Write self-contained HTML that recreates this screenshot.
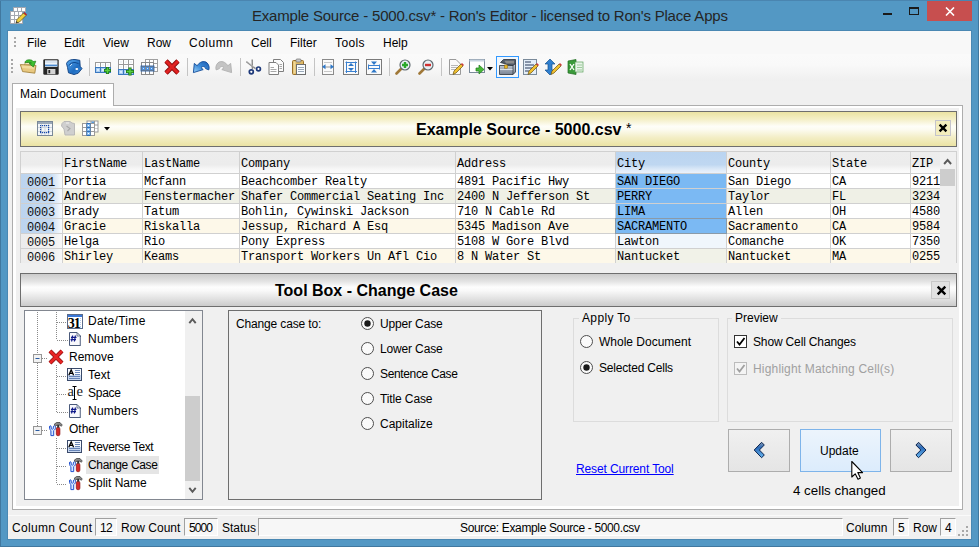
<!DOCTYPE html>
<html><head><meta charset="utf-8">
<style>
*{box-sizing:border-box}
html,body{margin:0;padding:0}
body{width:979px;height:547px;position:relative;overflow:hidden;background:#5398c4;font-family:"Liberation Sans",sans-serif;font-size:12px;color:#000}
.a{position:absolute}
.t{position:absolute;white-space:pre;line-height:1}
.mono{font-family:"Liberation Mono",monospace}
</style></head><body>
<!-- title bar -->
<div class="a" style="left:0;top:0;width:979px;height:547px;border:1px solid #41789f"></div>
<div class="a" style="left:7px;top:30px;width:965px;height:510px;border:1px solid #4a88b3"></div>
<div class="a" style="left:0;top:0;width:979px;height:1px;background:#4a85b0"></div>
<div class="t" style="left:252px;top:8px;font-size:15px;letter-spacing:-0.2px;color:#252525">Example Source - 5000.csv* - Ron's Editor - licensed to Ron's Place Apps</div>
<div class="a" style="left:883px;top:13px;width:9px;height:2px;background:#1a1a1a"></div>
<div class="a" style="left:909px;top:7px;width:10px;height:8px;border:1px solid #1a1a1a;border-top-width:2px"></div>
<div class="a" style="left:927px;top:1px;width:45px;height:20px;background:#c74f4f"></div>

<!-- client -->
<div class="a" style="left:8px;top:31px;width:963px;height:508px;background:#f0f0f0"></div>
<!-- menubar -->
<div class="a" style="left:8px;top:31px;width:963px;height:23px;background:#f8f8f8"></div>
<div class="t" style="left:27px;top:37px">File</div>
<div class="t" style="left:64px;top:37px">Edit</div>
<div class="t" style="left:103px;top:37px">View</div>
<div class="t" style="left:147px;top:37px">Row</div>
<div class="t" style="left:189px;top:37px;letter-spacing:0.5px">Column</div>
<div class="t" style="left:251px;top:37px">Cell</div>
<div class="t" style="left:290px;top:37px">Filter</div>
<div class="t" style="left:335px;top:37px;letter-spacing:0.4px">Tools</div>
<div class="t" style="left:383px;top:37px">Help</div>
<!-- toolbar -->
<div class="a" style="left:8px;top:54px;width:963px;height:27px;background:linear-gradient(#fafafa,#f9f9f9 40%,#efefef)"></div>

<!-- tab control -->
<div class="a" style="left:12px;top:105px;width:951px;height:405px;border:1px solid #adadad;background:#fff"></div>
<div class="a" style="left:16px;top:108px;width:943px;height:398px;background:#f0f0f0"></div>
<div class="a" style="left:12px;top:83px;width:102px;height:23px;border:1px solid #adadad;border-bottom:none;background:#fff"></div>
<div class="t" style="left:20px;top:88px;letter-spacing:0.15px">Main Document</div>

<!-- yellow header -->
<div class="a" style="left:20px;top:111px;width:937px;height:36px;border:1px solid #6e6e6e;background:linear-gradient(#ebe3a2 0%,#f4efc8 22%,#fefef8 42%,#fcfbf0 52%,#f3eec6 75%,#ebe3a3 100%)"></div>
<div class="t" style="left:416px;top:122px;font-size:16px;font-weight:bold">Example Source - 5000.csv <span style="font-weight:normal;font-size:14px;position:relative;top:-2px">*</span></div>
<div class="a" style="left:935px;top:120px;width:16px;height:16px;border:1px solid #c4c4cc;background:#f3edbd"></div>

<!-- grid -->
<!--GRID-->
<div class="a" id="grid" style="left:20px;top:151px;width:937px;height:112px;background:#fff;overflow:hidden">
<div class="a" style="left:0px;top:0;width:42px;height:22px;background:linear-gradient(#ededed,#ececec 62%,#f7f7f7 82%,#fbfbfb)"></div>
<div class="a" style="left:42px;top:0;width:80px;height:22px;background:linear-gradient(#ededed,#ececec 62%,#f7f7f7 82%,#fbfbfb)"></div>
<div class="t mono" style="left:44px;top:7px;font-size:12px;letter-spacing:-0.2px;color:#000">FirstName</div>
<div class="a" style="left:122px;top:0;width:97px;height:22px;background:linear-gradient(#ededed,#ececec 62%,#f7f7f7 82%,#fbfbfb)"></div>
<div class="t mono" style="left:124px;top:7px;font-size:12px;letter-spacing:-0.2px;color:#000">LastName</div>
<div class="a" style="left:219px;top:0;width:216px;height:22px;background:linear-gradient(#ededed,#ececec 62%,#f7f7f7 82%,#fbfbfb)"></div>
<div class="t mono" style="left:221px;top:7px;font-size:12px;letter-spacing:-0.2px;color:#000">Company</div>
<div class="a" style="left:435px;top:0;width:160px;height:22px;background:linear-gradient(#ededed,#ececec 62%,#f7f7f7 82%,#fbfbfb)"></div>
<div class="t mono" style="left:437px;top:7px;font-size:12px;letter-spacing:-0.2px;color:#000">Address</div>
<div class="a" style="left:595px;top:0;width:111px;height:22px;background:linear-gradient(#bad4f0,#bfd7f1 62%,#dae8f7 82%,#eaf2fb)"></div>
<div class="t mono" style="left:597px;top:7px;font-size:12px;letter-spacing:-0.2px;color:#000">City</div>
<div class="a" style="left:706px;top:0;width:104px;height:22px;background:linear-gradient(#ededed,#ececec 62%,#f7f7f7 82%,#fbfbfb)"></div>
<div class="t mono" style="left:708px;top:7px;font-size:12px;letter-spacing:-0.2px;color:#000">County</div>
<div class="a" style="left:810px;top:0;width:80px;height:22px;background:linear-gradient(#ededed,#ececec 62%,#f7f7f7 82%,#fbfbfb)"></div>
<div class="t mono" style="left:812px;top:7px;font-size:12px;letter-spacing:-0.2px;color:#000">State</div>
<div class="a" style="left:890px;top:0;width:30px;height:22px;background:linear-gradient(#ededed,#ececec 62%,#f7f7f7 82%,#fbfbfb)"></div>
<div class="t mono" style="left:892px;top:7px;font-size:12px;letter-spacing:-0.2px;color:#000">ZIP</div>
<div class="a" style="left:0px;top:22px;width:42px;height:15px;background:linear-gradient(90deg,#bcd4ef,#c4daf2 72%,#fafcfe)"></div>
<div class="t mono" style="left:7px;top:26px;font-size:12px;letter-spacing:-0.2px;color:#111">0001</div>
<div class="a" style="left:42px;top:22px;width:80px;height:15px;background:#ffffff"></div>
<div class="t mono" style="left:44px;top:25px;font-size:12px;letter-spacing:-0.2px;color:#000">Portia</div>
<div class="a" style="left:122px;top:22px;width:97px;height:15px;background:#ffffff"></div>
<div class="t mono" style="left:124px;top:25px;font-size:12px;letter-spacing:-0.2px;color:#000">Mcfann</div>
<div class="a" style="left:219px;top:22px;width:216px;height:15px;background:#ffffff"></div>
<div class="t mono" style="left:221px;top:25px;font-size:12px;letter-spacing:-0.2px;color:#000">Beachcomber Realty</div>
<div class="a" style="left:435px;top:22px;width:160px;height:15px;background:#ffffff"></div>
<div class="t mono" style="left:437px;top:25px;font-size:12px;letter-spacing:-0.2px;color:#000">4891 Pacific Hwy</div>
<div class="a" style="left:595px;top:22px;width:111px;height:15px;background:#7bb9f3"></div>
<div class="t mono" style="left:597px;top:25px;font-size:12px;letter-spacing:-0.2px;color:#000">SAN DIEGO</div>
<div class="a" style="left:706px;top:22px;width:104px;height:15px;background:#ffffff"></div>
<div class="t mono" style="left:708px;top:25px;font-size:12px;letter-spacing:-0.2px;color:#000">San Diego</div>
<div class="a" style="left:810px;top:22px;width:80px;height:15px;background:#ffffff"></div>
<div class="t mono" style="left:812px;top:25px;font-size:12px;letter-spacing:-0.2px;color:#000">CA</div>
<div class="a" style="left:890px;top:22px;width:30px;height:15px;background:#ffffff"></div>
<div class="t mono" style="left:892px;top:25px;font-size:12px;letter-spacing:-0.2px;color:#000">92111</div>
<div class="a" style="left:0px;top:37px;width:42px;height:15px;background:linear-gradient(90deg,#bcd4ef,#c4daf2 72%,#fafcfe)"></div>
<div class="t mono" style="left:7px;top:41px;font-size:12px;letter-spacing:-0.2px;color:#111">0002</div>
<div class="a" style="left:42px;top:37px;width:80px;height:15px;background:#eff0e6"></div>
<div class="t mono" style="left:44px;top:40px;font-size:12px;letter-spacing:-0.2px;color:#000">Andrew</div>
<div class="a" style="left:122px;top:37px;width:97px;height:15px;background:#eff0e6"></div>
<div class="t mono" style="left:124px;top:40px;font-size:12px;letter-spacing:-0.2px;color:#000">Fenstermacher</div>
<div class="a" style="left:219px;top:37px;width:216px;height:15px;background:#eff0e6"></div>
<div class="t mono" style="left:221px;top:40px;font-size:12px;letter-spacing:-0.2px;color:#000">Shafer Commercial Seating Inc</div>
<div class="a" style="left:435px;top:37px;width:160px;height:15px;background:#eff0e6"></div>
<div class="t mono" style="left:437px;top:40px;font-size:12px;letter-spacing:-0.2px;color:#000">2400 N Jefferson St</div>
<div class="a" style="left:595px;top:37px;width:111px;height:15px;background:#7bb9f3"></div>
<div class="t mono" style="left:597px;top:40px;font-size:12px;letter-spacing:-0.2px;color:#000">PERRY</div>
<div class="a" style="left:706px;top:37px;width:104px;height:15px;background:#eff0e6"></div>
<div class="t mono" style="left:708px;top:40px;font-size:12px;letter-spacing:-0.2px;color:#000">Taylor</div>
<div class="a" style="left:810px;top:37px;width:80px;height:15px;background:#eff0e6"></div>
<div class="t mono" style="left:812px;top:40px;font-size:12px;letter-spacing:-0.2px;color:#000">FL</div>
<div class="a" style="left:890px;top:37px;width:30px;height:15px;background:#eff0e6"></div>
<div class="t mono" style="left:892px;top:40px;font-size:12px;letter-spacing:-0.2px;color:#000">32347</div>
<div class="a" style="left:0px;top:52px;width:42px;height:15px;background:linear-gradient(90deg,#bcd4ef,#c4daf2 72%,#fafcfe)"></div>
<div class="t mono" style="left:7px;top:56px;font-size:12px;letter-spacing:-0.2px;color:#111">0003</div>
<div class="a" style="left:42px;top:52px;width:80px;height:15px;background:#ffffff"></div>
<div class="t mono" style="left:44px;top:55px;font-size:12px;letter-spacing:-0.2px;color:#000">Brady</div>
<div class="a" style="left:122px;top:52px;width:97px;height:15px;background:#ffffff"></div>
<div class="t mono" style="left:124px;top:55px;font-size:12px;letter-spacing:-0.2px;color:#000">Tatum</div>
<div class="a" style="left:219px;top:52px;width:216px;height:15px;background:#ffffff"></div>
<div class="t mono" style="left:221px;top:55px;font-size:12px;letter-spacing:-0.2px;color:#000">Bohlin, Cywinski Jackson</div>
<div class="a" style="left:435px;top:52px;width:160px;height:15px;background:#ffffff"></div>
<div class="t mono" style="left:437px;top:55px;font-size:12px;letter-spacing:-0.2px;color:#000">710 N Cable Rd</div>
<div class="a" style="left:595px;top:52px;width:111px;height:15px;background:#7bb9f3"></div>
<div class="t mono" style="left:597px;top:55px;font-size:12px;letter-spacing:-0.2px;color:#000">LIMA</div>
<div class="a" style="left:706px;top:52px;width:104px;height:15px;background:#ffffff"></div>
<div class="t mono" style="left:708px;top:55px;font-size:12px;letter-spacing:-0.2px;color:#000">Allen</div>
<div class="a" style="left:810px;top:52px;width:80px;height:15px;background:#ffffff"></div>
<div class="t mono" style="left:812px;top:55px;font-size:12px;letter-spacing:-0.2px;color:#000">OH</div>
<div class="a" style="left:890px;top:52px;width:30px;height:15px;background:#ffffff"></div>
<div class="t mono" style="left:892px;top:55px;font-size:12px;letter-spacing:-0.2px;color:#000">45805</div>
<div class="a" style="left:0px;top:67px;width:42px;height:15px;background:linear-gradient(90deg,#bcd4ef,#c4daf2 72%,#fafcfe)"></div>
<div class="t mono" style="left:7px;top:71px;font-size:12px;letter-spacing:-0.2px;color:#111">0004</div>
<div class="a" style="left:42px;top:67px;width:80px;height:15px;background:#fdf8e9"></div>
<div class="t mono" style="left:44px;top:70px;font-size:12px;letter-spacing:-0.2px;color:#000">Gracie</div>
<div class="a" style="left:122px;top:67px;width:97px;height:15px;background:#fdf8e9"></div>
<div class="t mono" style="left:124px;top:70px;font-size:12px;letter-spacing:-0.2px;color:#000">Riskalla</div>
<div class="a" style="left:219px;top:67px;width:216px;height:15px;background:#fdf8e9"></div>
<div class="t mono" style="left:221px;top:70px;font-size:12px;letter-spacing:-0.2px;color:#000">Jessup, Richard A Esq</div>
<div class="a" style="left:435px;top:67px;width:160px;height:15px;background:#fdf8e9"></div>
<div class="t mono" style="left:437px;top:70px;font-size:12px;letter-spacing:-0.2px;color:#000">5345 Madison Ave</div>
<div class="a" style="left:595px;top:67px;width:111px;height:15px;background:#7bb9f3"></div>
<div class="t mono" style="left:597px;top:70px;font-size:12px;letter-spacing:-0.2px;color:#000">SACRAMENTO</div>
<div class="a" style="left:706px;top:67px;width:104px;height:15px;background:#fdf8e9"></div>
<div class="t mono" style="left:708px;top:70px;font-size:12px;letter-spacing:-0.2px;color:#000">Sacramento</div>
<div class="a" style="left:810px;top:67px;width:80px;height:15px;background:#fdf8e9"></div>
<div class="t mono" style="left:812px;top:70px;font-size:12px;letter-spacing:-0.2px;color:#000">CA</div>
<div class="a" style="left:890px;top:67px;width:30px;height:15px;background:#fdf8e9"></div>
<div class="t mono" style="left:892px;top:70px;font-size:12px;letter-spacing:-0.2px;color:#000">95841</div>
<div class="a" style="left:0px;top:82px;width:42px;height:15px;background:linear-gradient(90deg,#ececec,#f0f0f0 80%,#f8f8f8)"></div>
<div class="t mono" style="left:7px;top:86px;font-size:12px;letter-spacing:-0.2px;color:#111">0005</div>
<div class="a" style="left:42px;top:82px;width:80px;height:15px;background:#ffffff"></div>
<div class="t mono" style="left:44px;top:85px;font-size:12px;letter-spacing:-0.2px;color:#000">Helga</div>
<div class="a" style="left:122px;top:82px;width:97px;height:15px;background:#ffffff"></div>
<div class="t mono" style="left:124px;top:85px;font-size:12px;letter-spacing:-0.2px;color:#000">Rio</div>
<div class="a" style="left:219px;top:82px;width:216px;height:15px;background:#ffffff"></div>
<div class="t mono" style="left:221px;top:85px;font-size:12px;letter-spacing:-0.2px;color:#000">Pony Express</div>
<div class="a" style="left:435px;top:82px;width:160px;height:15px;background:#ffffff"></div>
<div class="t mono" style="left:437px;top:85px;font-size:12px;letter-spacing:-0.2px;color:#000">5108 W Gore Blvd</div>
<div class="a" style="left:595px;top:82px;width:111px;height:15px;background:#f0f6fc"></div>
<div class="t mono" style="left:597px;top:85px;font-size:12px;letter-spacing:-0.2px;color:#000">Lawton</div>
<div class="a" style="left:706px;top:82px;width:104px;height:15px;background:#ffffff"></div>
<div class="t mono" style="left:708px;top:85px;font-size:12px;letter-spacing:-0.2px;color:#000">Comanche</div>
<div class="a" style="left:810px;top:82px;width:80px;height:15px;background:#ffffff"></div>
<div class="t mono" style="left:812px;top:85px;font-size:12px;letter-spacing:-0.2px;color:#000">OK</div>
<div class="a" style="left:890px;top:82px;width:30px;height:15px;background:#ffffff"></div>
<div class="t mono" style="left:892px;top:85px;font-size:12px;letter-spacing:-0.2px;color:#000">73505</div>
<div class="a" style="left:0px;top:97px;width:42px;height:15px;background:linear-gradient(90deg,#ececec,#f0f0f0 80%,#f8f8f8)"></div>
<div class="t mono" style="left:7px;top:101px;font-size:12px;letter-spacing:-0.2px;color:#111">0006</div>
<div class="a" style="left:42px;top:97px;width:80px;height:15px;background:#fdf8e9"></div>
<div class="t mono" style="left:44px;top:100px;font-size:12px;letter-spacing:-0.2px;color:#000">Shirley</div>
<div class="a" style="left:122px;top:97px;width:97px;height:15px;background:#fdf8e9"></div>
<div class="t mono" style="left:124px;top:100px;font-size:12px;letter-spacing:-0.2px;color:#000">Keams</div>
<div class="a" style="left:219px;top:97px;width:216px;height:15px;background:#fdf8e9"></div>
<div class="t mono" style="left:221px;top:100px;font-size:12px;letter-spacing:-0.2px;color:#000">Transport Workers Un Afl Cio</div>
<div class="a" style="left:435px;top:97px;width:160px;height:15px;background:#fdf8e9"></div>
<div class="t mono" style="left:437px;top:100px;font-size:12px;letter-spacing:-0.2px;color:#000">8 N Water St</div>
<div class="a" style="left:595px;top:97px;width:111px;height:15px;background:#f1f2e8"></div>
<div class="t mono" style="left:597px;top:100px;font-size:12px;letter-spacing:-0.2px;color:#000">Nantucket</div>
<div class="a" style="left:706px;top:97px;width:104px;height:15px;background:#fdf8e9"></div>
<div class="t mono" style="left:708px;top:100px;font-size:12px;letter-spacing:-0.2px;color:#000">Nantucket</div>
<div class="a" style="left:810px;top:97px;width:80px;height:15px;background:#fdf8e9"></div>
<div class="t mono" style="left:812px;top:100px;font-size:12px;letter-spacing:-0.2px;color:#000">MA</div>
<div class="a" style="left:890px;top:97px;width:30px;height:15px;background:#fdf8e9"></div>
<div class="t mono" style="left:892px;top:100px;font-size:12px;letter-spacing:-0.2px;color:#000">02554</div>
<div class="a" style="left:42px;top:0;width:1px;height:113px;background:#d0d0d0"></div>
<div class="a" style="left:122px;top:0;width:1px;height:113px;background:#d0d0d0"></div>
<div class="a" style="left:219px;top:0;width:1px;height:113px;background:#d0d0d0"></div>
<div class="a" style="left:435px;top:0;width:1px;height:113px;background:#d0d0d0"></div>
<div class="a" style="left:595px;top:0;width:1px;height:113px;background:#d0d0d0"></div>
<div class="a" style="left:706px;top:0;width:1px;height:113px;background:#d0d0d0"></div>
<div class="a" style="left:810px;top:0;width:1px;height:113px;background:#d0d0d0"></div>
<div class="a" style="left:890px;top:0;width:1px;height:113px;background:#d0d0d0"></div>
<div class="a" style="left:0;top:22px;width:920px;height:1px;background:#d0d0d0"></div>
<div class="a" style="left:0;top:37px;width:920px;height:1px;background:#d0d0d0"></div>
<div class="a" style="left:0;top:52px;width:920px;height:1px;background:#d0d0d0"></div>
<div class="a" style="left:0;top:67px;width:920px;height:1px;background:#d0d0d0"></div>
<div class="a" style="left:0;top:82px;width:920px;height:1px;background:#d0d0d0"></div>
<div class="a" style="left:0;top:97px;width:920px;height:1px;background:#d0d0d0"></div>
<div class="a" style="left:595px;top:67px;width:112px;height:16px;border:1px solid #8a9aa8"></div>
<div class="a" style="left:920px;top:0;width:17px;height:113px;background:#f0f0f0"></div>
<div class="a" style="left:920px;top:18px;width:15px;height:17px;background:#cdcdcd"></div>
<svg class="a" style="left:923px;top:6px" width="11" height="9"><path d="M1.1 7 L4.6 3 L8.1 7" fill="none" stroke="#5a5a5a" stroke-width="1.9"/></svg>
<div class="a" style="left:0;top:0;width:937px;height:113px;border:1px solid #d0d0d0;border-bottom:none"></div>
</div>
<!--/GRID-->

<!-- toolbox header -->
<div class="a" style="left:20px;top:273px;width:937px;height:34px;border:1px solid #6e6e6e;background:linear-gradient(#cbcbcb 0%,#e2e2e2 22%,#fdfdfd 41%,#f9f9f9 52%,#e2e2e2 77%,#cbcbcb 100%)"></div>
<div class="t" style="left:275px;top:283px;font-size:16px;font-weight:bold">Tool Box - Change Case</div>
<div class="a" style="left:931px;top:281px;width:19px;height:18px;border:1px solid #c8c8c8;background:#e2e2e2"></div>

<!-- tree -->
<div class="a" style="left:24px;top:310px;width:179px;height:190px;border:1px solid #828790;background:#fff"></div>

<!-- change case panel -->
<div class="a" style="left:228px;top:310px;width:314px;height:190px;border:1px solid #6e6e6e"></div>
<div class="t" style="left:236px;top:318px;letter-spacing:-0.15px">Change case to:</div>

<!-- groups -->
<div class="a" style="left:573px;top:318px;width:146px;height:104px;border:1px solid #dcdcdc"></div>
<div class="t" style="left:579px;top:312px;padding:0 3px;background:#f0f0f0;letter-spacing:0.35px">Apply To</div>
<div class="a" style="left:727px;top:318px;width:226px;height:104px;border:1px solid #dcdcdc"></div>
<div class="t" style="left:732px;top:312px;padding:0 3px;background:#f0f0f0">Preview</div>

<!-- buttons -->
<div class="a" style="left:728px;top:429px;width:62px;height:43px;border:1px solid #adadad;background:linear-gradient(#f0f0f0,#e5e5e5)"></div>
<div class="a" style="left:800px;top:429px;width:81px;height:43px;border:1px solid #7eb4ea;background:linear-gradient(#ecf4fc,#dcecfc)"></div>
<div class="a" style="left:890px;top:429px;width:62px;height:43px;border:1px solid #adadad;background:linear-gradient(#f0f0f0,#e5e5e5)"></div>
<div class="t" style="left:820px;top:445px">Update</div>
<div class="t" style="left:793px;top:484px;font-size:13.33px">4 cells changed</div>
<div class="t" style="left:576px;top:463px;color:#0000ff;text-decoration:underline;letter-spacing:-0.12px">Reset Current Tool</div>

<!-- status bar -->
<div class="a" style="left:8px;top:515px;width:963px;height:1px;background:#fafafa"></div>
<!-- ICONS -->
<!-- title icon -->
<svg class="a" style="left:8px;top:5px" width="20" height="20" viewBox="8 5 20 20">
<rect x="13" y="7" width="13" height="5" fill="#a4a8b0"/>
<rect x="10" y="11" width="13" height="13" fill="#a4a8b0"/>
<g fill="#fff">
<rect x="14" y="8" width="3" height="3"/><rect x="18" y="8" width="3" height="3"/><rect x="22" y="8" width="3" height="3"/>
<rect x="11" y="12" width="3" height="3"/><rect x="15" y="12" width="3" height="3"/><rect x="19" y="12" width="3" height="3"/>
<rect x="11" y="16" width="3" height="3"/><rect x="15" y="16" width="3" height="3"/><rect x="19" y="16" width="3" height="3"/>
<rect x="11" y="20" width="3" height="3"/><rect x="15" y="20" width="3" height="3"/><rect x="19" y="20" width="3" height="3"/>
</g>
<path d="M16 23 L17 19.5 L23.5 13 L26 15.5 L19.5 22 Z" fill="#f0d040" stroke="#5a4a10" stroke-width="0.7"/>
<path d="M23.5 13 L24.5 12 L27 14.5 L26 15.5 Z" fill="#c82020"/>
<path d="M16 23 L16.6 21 L18 22.4 Z" fill="#303030"/>
</svg>
<!-- close X -->
<svg class="a" style="left:945px;top:7px" width="10" height="9" viewBox="0 0 10 9"><path d="M1 0.5 L9 8.5 M9 0.5 L1 8.5" stroke="#fff" stroke-width="1.6"/></svg>
<!-- menu grip -->
<div class="a" style="left:14px;top:37px;width:2px;height:2px;background:#a8a8a8;box-shadow:0 4px #a8a8a8,0 8px #a8a8a8"></div>
<!-- toolbar grip -->
<div class="a" style="left:11px;top:59px;width:2px;height:2px;background:#a8a8a8;box-shadow:0 4px #a8a8a8,0 8px #a8a8a8,0 12px #a8a8a8"></div>
<!-- separators -->
<div class="a" style="left:89px;top:58px;width:1px;height:18px;background:#c4c4c4"></div>
<div class="a" style="left:187px;top:58px;width:1px;height:18px;background:#c4c4c4"></div>
<div class="a" style="left:240px;top:58px;width:1px;height:18px;background:#c4c4c4"></div>
<div class="a" style="left:314px;top:58px;width:1px;height:18px;background:#c4c4c4"></div>
<div class="a" style="left:389px;top:58px;width:1px;height:18px;background:#c4c4c4"></div>
<div class="a" style="left:441px;top:58px;width:1px;height:18px;background:#c4c4c4"></div>

<!-- open folder -->
<svg class="a" style="left:18px;top:57px" width="20" height="19" viewBox="18 57 20 19">
<path d="M24.5 65 L25 62.5 L31 62.3 L33 64 Z" fill="#f4e8c0" stroke="#b89850" stroke-width="0.6"/>
<path d="M20.3 64.6 L36 65.4 L34.8 73.2 L22.6 71.6 Z" fill="#e8c880" stroke="#9a7830" stroke-width="0.8"/>
<path d="M21.5 65.5 L34.5 66.3 L34 69 L22.2 68 Z" fill="#f2dca0"/>
<path d="M25 62.8 C25 59.8 29 59.2 32 60.3 L33.2 61.5 L35.8 61.2 L33.4 67 L29.2 63.6 L31.4 63 C29.8 62.2 27 62.3 25 62.8 Z" fill="#3cc030" stroke="#1a7a14" stroke-width="0.7"/>
</svg>
<!-- save -->
<svg class="a" style="left:43px;top:59px" width="16" height="16" viewBox="0 0 16 16">
<rect x="0.3" y="0.3" width="15.4" height="15.4" rx="1.2" fill="#262626"/>
<rect x="2" y="1.3" width="12.4" height="6.6" fill="#eef3f8"/>
<rect x="2" y="2.6" width="12.4" height="0.8" fill="#b8cce0"/>
<rect x="2" y="5.6" width="12.4" height="1.6" fill="#4a8ad0"/>
<rect x="4.2" y="10" width="8.2" height="5.2" fill="#d4d4d4"/>
<rect x="5.4" y="11" width="1.8" height="3.2" fill="#262626"/>
</svg>
<!-- blue globe -->
<svg class="a" style="left:64px;top:57px" width="20" height="20" viewBox="64 57 20 20">
<defs><linearGradient id="bg1" x1="0" y1="0" x2="1" y2="1"><stop offset="0" stop-color="#5aaaf0"/><stop offset="0.6" stop-color="#1f6cc0"/><stop offset="1" stop-color="#3a8ad8"/></linearGradient></defs>
<path d="M66.5 63.5 C67.5 60.3 71.5 59.2 75 59.5 L79.8 60.3 L80.2 66.3 L82 68.6 L78.2 73.2 L74 74.6 L68.5 72.8 L67.5 67.5 Z" fill="url(#bg1)" stroke="#0f3f80" stroke-width="0.9"/>
<path d="M69 65.5 C70 63.5 72 62.5 75 62.5 L78.5 63.5" fill="none" stroke="#0f4a90" stroke-width="1"/>
<path d="M70.2 65.8 L71.8 64.2" stroke="#e8f4ff" stroke-width="1"/>
<ellipse cx="76.8" cy="69" rx="1.4" ry="1" fill="#fff"/>
</svg>
<!-- grid add 1 -->
<svg class="a" style="left:90px;top:56px" width="70" height="22" viewBox="90 56 70 22">
<rect x="95" y="62" width="16" height="11" fill="#9a9a9a"/><rect x="95" y="67" width="16" height="6" fill="#3a78c0"/><rect x="96" y="63" width="4" height="4" fill="#fff"/><rect x="97.5" y="64.5" width="1" height="1" fill="#c8d4e0"/><rect x="96" y="68" width="4" height="4" fill="#a8ccf0"/><rect x="97" y="69" width="2" height="2" fill="#d8ecff"/><rect x="101" y="63" width="4" height="4" fill="#fff"/><rect x="102.5" y="64.5" width="1" height="1" fill="#c8d4e0"/><rect x="101" y="68" width="4" height="4" fill="#a8ccf0"/><rect x="102" y="69" width="2" height="2" fill="#d8ecff"/><rect x="106" y="63" width="4" height="4" fill="#fff"/><rect x="107.5" y="64.5" width="1" height="1" fill="#c8d4e0"/><rect x="106" y="68" width="4" height="4" fill="#a8ccf0"/><rect x="107" y="69" width="2" height="2" fill="#d8ecff"/><path d="M104 70.5 H111 M107.5 67 V74" stroke="#1f7a1a" stroke-width="3.2"/><path d="M104.8 70.5 H110.2 M107.5 67.8 V73.2" stroke="#5ad040" stroke-width="1.4"/><rect x="118" y="59" width="16" height="16" fill="#9a9a9a"/><rect x="118" y="69" width="16" height="6" fill="#3a78c0"/><rect x="119" y="60" width="4" height="4" fill="#fff"/><rect x="120.5" y="61.5" width="1" height="1" fill="#c8d4e0"/><rect x="124" y="60" width="4" height="4" fill="#fff"/><rect x="125.5" y="61.5" width="1" height="1" fill="#c8d4e0"/><rect x="129" y="60" width="4" height="4" fill="#fff"/><rect x="130.5" y="61.5" width="1" height="1" fill="#c8d4e0"/><rect x="119" y="65" width="4" height="4" fill="#fff"/><rect x="120.5" y="66.5" width="1" height="1" fill="#c8d4e0"/><rect x="124" y="65" width="4" height="4" fill="#fff"/><rect x="125.5" y="66.5" width="1" height="1" fill="#c8d4e0"/><rect x="129" y="65" width="4" height="4" fill="#fff"/><rect x="130.5" y="66.5" width="1" height="1" fill="#c8d4e0"/><rect x="119" y="70" width="4" height="4" fill="#a8ccf0"/><rect x="120" y="71" width="2" height="2" fill="#d8ecff"/><rect x="124" y="70" width="4" height="4" fill="#a8ccf0"/><rect x="125" y="71" width="2" height="2" fill="#d8ecff"/><rect x="129" y="70" width="4" height="4" fill="#a8ccf0"/><rect x="130" y="71" width="2" height="2" fill="#d8ecff"/><path d="M126 71.5 H134 M130 67.5 V75.5" stroke="#1f7a1a" stroke-width="3.2"/><path d="M126.8 71.5 H133.2 M130 68.3 V74.7" stroke="#5ad040" stroke-width="1.4"/><rect x="145" y="59" width="13" height="13" fill="#a0a0a0"/><rect x="146" y="60" width="3" height="3" fill="#fff"/><rect x="150" y="60" width="3" height="3" fill="#fff"/><rect x="154" y="60" width="3" height="3" fill="#fff"/><rect x="146" y="64" width="3" height="3" fill="#fff"/><rect x="150" y="64" width="3" height="3" fill="#fff"/><rect x="154" y="64" width="3" height="3" fill="#fff"/><rect x="146" y="68" width="3" height="3" fill="#fff"/><rect x="150" y="68" width="3" height="3" fill="#fff"/><rect x="154" y="68" width="3" height="3" fill="#fff"/><rect x="141" y="62" width="13" height="13" fill="#8a8a8a"/><rect x="142" y="63" width="3" height="3" fill="#fff"/><rect x="146" y="63" width="3" height="3" fill="#fff"/><rect x="150" y="63" width="3" height="3" fill="#fff"/><rect x="142" y="67" width="3" height="3" fill="#4a90e0"/><rect x="143" y="68" width="1" height="1" fill="#d0e8ff"/><rect x="146" y="67" width="3" height="3" fill="#4a90e0"/><rect x="147" y="68" width="1" height="1" fill="#d0e8ff"/><rect x="150" y="67" width="3" height="3" fill="#4a90e0"/><rect x="151" y="68" width="1" height="1" fill="#d0e8ff"/><rect x="142" y="71" width="3" height="3" fill="#fff"/><rect x="146" y="71" width="3" height="3" fill="#fff"/><rect x="150" y="71" width="3" height="3" fill="#fff"/><rect x="141" y="66" width="13" height="5" fill="none" stroke="#1f5aa8" stroke-width="0.8"/>
</svg>
<!-- red X -->
<svg class="a" style="left:164px;top:59px" width="16" height="16" viewBox="0 0 16 16">
<path d="M2 2 L14 14 M14 2 L2 14" stroke="#8a0a0a" stroke-width="4.6"/>
<path d="M2 2 L14 14 M14 2 L2 14" stroke="#e02222" stroke-width="3"/>
</svg>
<!-- undo -->
<svg class="a" style="left:188px;top:56px" width="48" height="22" viewBox="188 56 48 22">
<defs><linearGradient id="ug" x1="0" y1="1" x2="1" y2="0"><stop offset="0" stop-color="#9ad0f8"/><stop offset="0.5" stop-color="#3a8ad8"/><stop offset="1" stop-color="#1a5ab0"/></linearGradient></defs>
<path d="M193.4 72.6 L194.3 63.4 L197.2 65.8 C199.2 62 204 60.2 207 62.8 C209 64.8 209.6 67.5 208.8 69.9 L205.6 68.6 C205.2 66.6 203 65.6 201 67.6 L203.2 69.6 Z" fill="url(#ug)" stroke="#0f4a98" stroke-width="0.9" stroke-linejoin="round"/>
<path d="M231.6 72.6 L230.7 63.4 L227.8 65.8 C225.8 62 221 60.2 218 62.8 C216 64.8 215.4 67.5 216.2 69.9 L219.4 68.6 C219.8 66.6 222 65.6 224 67.6 L221.8 69.6 Z" fill="#c4c4c4" stroke="#b0b0b0" stroke-width="0.9" stroke-linejoin="round"/>
</svg>
<!-- scissors -->
<svg class="a" style="left:243px;top:57px" width="70" height="20" viewBox="243 57 70 20">
<path d="M246.3 61.6 L255.5 68.6" stroke="#8c8c8c" stroke-width="1.4"/>
<path d="M252.2 59.5 L252.4 69" stroke="#8c8c8c" stroke-width="1.4"/>
<path d="M246.8 61.4 L254 67" stroke="#e0e0e0" stroke-width="0.5"/>
<circle cx="251.3" cy="71.8" r="2" fill="#fff" stroke="#1f3a7a" stroke-width="1.7"/>
<circle cx="258.5" cy="68.9" r="1.9" fill="#fff" stroke="#1f3a7a" stroke-width="1.7"/>
<!-- copy -->
<path d="M273.5 59.5 H280.5 L283.5 62.5 V71.5 H273.5 Z" fill="#fbfbfb" stroke="#7e7e7e"/>
<path d="M269 62.5 H276 L278.5 65 V74.5 H269 Z" fill="#fdfdfd" stroke="#7e7e7e"/>
<path d="M270.5 67.5 H274 M270.5 69.5 H276.5 M270.5 71.5 H276.5 M279.5 64.5 H282 M279.5 66.5 H282 M279.5 68.5 H282" stroke="#a8a8a8" stroke-width="1"/>
<!-- paste -->
<rect x="292.5" y="60.5" width="11" height="14" rx="1" fill="#dcb868" stroke="#9a7028"/>
<rect x="293.5" y="61.5" width="2" height="12" fill="#f0d898"/>
<rect x="296" y="59" width="5" height="3" rx="1" fill="#c8c8c8" stroke="#707070" stroke-width="0.7"/>
<rect x="296.5" y="64.5" width="9" height="10" fill="#f8fcff" stroke="#6e6e6e"/>
<path d="M298 67.5 H304 M298 69.5 H304 M298 71.5 H304" stroke="#9aa8b8" stroke-width="1"/>
</svg>
<!-- col width -->
<svg class="a" style="left:318px;top:56px" width="68" height="22" viewBox="318 56 68 22">
<rect x="322.5" y="59.5" width="11" height="15" fill="#fafafa" stroke="#8a8a8a"/>
<path d="M324 62.5 H332 M324 66.5 H332 M324 67.5 H332 M324 71.5 H332" stroke="#c8c8c8" stroke-width="1"/>
<path d="M322 66.8 L325.5 64.3 L325.5 69.3 Z M334 66.8 L330.5 64.3 L330.5 69.3 Z" fill="#2f78c8"/>
<rect x="343.5" y="59.5" width="15" height="15" fill="#fafafa" stroke="#7a7a7a"/>
<path d="M346.5 61.5 V73 M355.5 61.5 V73 M345.5 62.5 H357 M345.5 71.5 H357" stroke="#3a80d0" stroke-width="1"/>
<path d="M348 66 L351 63 L354 66 Z M348 68 L351 71 L354 68 Z" fill="#2f78c8"/>
<rect x="366.5" y="59.5" width="15" height="15" fill="#fafafa" stroke="#7a7a7a"/>
<path d="M368.5 65.5 H379.5 M368.5 68.5 H379.5 M368.5 64.5 V69.5 M379.5 64.5 V69.5" stroke="#3a80d0" stroke-width="1"/>
<path d="M371 61.5 H377 L374 65 Z M371 72.5 H377 L374 69 Z" fill="#2f78c8"/>
</svg>
<!-- zoom in -->
<svg class="a" style="left:395px;top:59px" width="16" height="16" viewBox="0 0 16 16">
<path d="M1.5 14.5 L6 10" stroke="#a07838" stroke-width="2.6" stroke-linecap="round"/>
<circle cx="10" cy="6" r="5" fill="#e8f0f4" stroke="#606a70" stroke-width="1.2"/>
<path d="M7 6 H13 M10 3 V9" stroke="#2aa82a" stroke-width="2.4"/>
</svg>
<!-- zoom out -->
<svg class="a" style="left:418px;top:59px" width="16" height="16" viewBox="0 0 16 16">
<path d="M1.5 14.5 L6 10" stroke="#a07838" stroke-width="2.6" stroke-linecap="round"/>
<circle cx="10" cy="6" r="5" fill="#e8f0f4" stroke="#606a70" stroke-width="1.2"/>
<path d="M7 6 H13" stroke="#d03030" stroke-width="2.4"/>
</svg>
<!-- doc pencil -->
<svg class="a" style="left:448px;top:59px" width="16" height="16" viewBox="0 0 16 16">
<path d="M1.5 0.5 H8 L12.5 5 V15.5 H1.5 Z" fill="#fafafa" stroke="#9a9a9a"/>
<path d="M3 6.5 H10 M3 8.5 H9 M3 10.5 H7" stroke="#b8b8b8" stroke-width="1"/>
<path d="M5 15.5 L6 12 L13 5 L15 7 L8 14 Z" fill="#f0c030" stroke="#6a5010" stroke-width="0.7"/>
<path d="M13 5 L14 4 L16 6 L15 7 Z" fill="#d03a3a"/>
</svg>
<!-- window arrow -->
<svg class="a" style="left:469px;top:59px" width="17" height="16" viewBox="0 0 17 16">
<rect x="0.5" y="0.5" width="15" height="13" fill="#fff" stroke="#7a8a9a"/>
<rect x="0.5" y="0.5" width="15" height="2" fill="#c8d4e0"/>
<path d="M7 9 H10 V6 L15 10.5 L10 15 V12 H7 Z" fill="#48b838" stroke="#1f7a1a" stroke-width="0.7"/>
</svg>
<svg class="a" style="left:487px;top:67px" width="6" height="4" viewBox="0 0 6 4"><path d="M0 0 H6 L3 3.5 Z" fill="#000"/></svg>
<!-- highlighted button -->
<div class="a" style="left:496px;top:56px;width:23px;height:22px;border:1px solid #3399ff;background:#f2f7fc"></div>
<svg class="a" style="left:496px;top:56px" width="23" height="22" viewBox="496 56 23 22">
<defs><linearGradient id="chest" x1="0" y1="0" x2="0" y2="1"><stop offset="0" stop-color="#c8d0da"/><stop offset="1" stop-color="#7a8494"/></linearGradient></defs>
<path d="M500.5 62.5 L503.5 59.5 L515.5 59.5 L515.5 64 L513 66 Z" fill="#505a68" stroke="#2a3038" stroke-width="0.8"/>
<path d="M504.5 60.8 L514 60.8 L514 63.5 L506 63.5 Z" fill="#8a8a8a"/>
<path d="M499.5 65.5 L513 65.5 L515.5 63.5 L515.5 72 L513 74.5 L499.5 74.5 Z" fill="url(#chest)" stroke="#2a3038" stroke-width="0.8"/>
<path d="M513 65.5 V74.5" stroke="#2a3038" stroke-width="0.7"/>
<path d="M500 69.5 H512.5" stroke="#e8eef4" stroke-width="0.8"/>
<rect x="504.5" y="65" width="3" height="3.2" fill="#e8b820" stroke="#8a6010" stroke-width="0.5"/>
</svg>
<!-- form pencil -->
<svg class="a" style="left:523px;top:59px" width="16" height="16" viewBox="0 0 16 16">
<rect x="0.5" y="0.5" width="13" height="15" fill="#e4eef8" stroke="#7a8a9a"/>
<path d="M2 3 H8 M2 6 H11 M2 9 H11 M2 12 H6" stroke="#2a3a5a" stroke-width="1"/>
<path d="M5 15.5 L6 12 L13 5 L15 7 L8 14 Z" fill="#f0c030" stroke="#6a5010" stroke-width="0.7"/>
<path d="M13 5 L14 4 L16 6 L15 7 Z" fill="#d03a3a"/>
</svg>
<!-- arrows pencil -->
<svg class="a" style="left:545px;top:59px" width="17" height="16" viewBox="0 0 17 16">
<path d="M5 0 L10 5 L7 5 L7 11 L10 11 L5 16 L0 11 L3 11 L3 5 L0 5 Z" fill="#2f7fd0" stroke="#14508c" stroke-width="0.7"/>
<path d="M6 15.5 L7 12 L14 5 L16 7 L9 14 Z" fill="#f0c030" stroke="#6a5010" stroke-width="0.7"/>
<path d="M14 5 L15 4 L17 6 L16 7 Z" fill="#d03a3a"/>
</svg>
<!-- excel -->
<svg class="a" style="left:567px;top:59px" width="17" height="16" viewBox="0 0 17 16">
<path d="M1 2 L9 0.5 L9 15.5 L1 14 Z" fill="#3a9a3a" stroke="#1f6a1f" stroke-width="0.7"/>
<rect x="8" y="3" width="8" height="10" fill="#e8f4e8" stroke="#5aa05a" stroke-width="0.7"/>
<path d="M3 5 L7 11 M7 5 L3 11" stroke="#fff" stroke-width="1.3"/>
<path d="M10 6 H15 M10 8.5 H15 M10 11 H15" stroke="#8ac08a" stroke-width="0.8"/>
</svg>

<!-- yellow header icons -->
<svg class="a" style="left:37px;top:121px" width="16" height="15" viewBox="0 0 16 15">
<rect x="0.5" y="0.5" width="15" height="14" fill="#f4f6f8" stroke="#7a8898"/>
<rect x="1" y="1" width="14" height="2" fill="#9aa8b8"/>
<path d="M4.5 3 V14 M8 3 V14 M11.5 3 V14 M1 6.5 H15 M1 10.5 H15" stroke="#d0d8e0" stroke-width="1"/>
<g fill="#1a4aa8">
<rect x="3" y="4" width="1.2" height="1.2"/><rect x="5" y="4" width="1.2" height="1.2"/><rect x="7" y="4" width="1.2" height="1.2"/><rect x="9" y="4" width="1.2" height="1.2"/><rect x="11" y="4" width="1.2" height="1.2"/>
<rect x="3" y="11" width="1.2" height="1.2"/><rect x="5" y="11" width="1.2" height="1.2"/><rect x="7" y="11" width="1.2" height="1.2"/><rect x="9" y="11" width="1.2" height="1.2"/><rect x="11" y="11" width="1.2" height="1.2"/>
<rect x="3" y="6" width="1.2" height="1.2"/><rect x="3" y="8" width="1.2" height="1.2"/><rect x="3" y="10" width="1.2" height="1"/>
<rect x="11" y="6" width="1.2" height="1.2"/><rect x="11" y="8" width="1.2" height="1.2"/><rect x="11" y="10" width="1.2" height="1"/>
</g>
</svg>
<svg class="a" style="left:60px;top:120px" width="16" height="16" viewBox="0 0 16 16">
<path d="M4 1.5 L10 1.5 L12 3 L14.5 3.5 L14.5 15 L5 15 L4 9 L1.5 6 L2 3.5 Z" fill="#cfcfcf" stroke="#b4b4b4" stroke-width="0.9"/>
<path d="M6 2 L9 2 L9 4 L6 4 Z" fill="#e0e0e0"/>
<path d="M6.5 6 L10 8.5 L7.5 11" stroke="#a8a8a8" fill="none" stroke-width="1.1"/>
</svg>
<svg class="a" style="left:82px;top:120px" width="17" height="16" viewBox="0 0 17 16">
<rect x="4.5" y="0.5" width="12" height="12" fill="#9a9a9a"/>
<g fill="#fff"><rect x="5.5" y="1.5" width="3" height="3"/><rect x="9.5" y="1.5" width="2.5" height="3"/><rect x="13" y="1.5" width="2.5" height="3"/><rect x="13" y="5.5" width="2.5" height="3"/><rect x="13" y="9" width="2.5" height="2.5"/></g>
<rect x="9.5" y="1.5" width="2.5" height="3" fill="#5a9ad8"/>
<rect x="0" y="3" width="13" height="13" fill="#9a9a9a"/>
<g fill="#fff">
<rect x="1" y="4" width="3" height="3"/><rect x="9" y="4" width="3" height="3"/>
<rect x="1" y="8" width="3" height="3"/><rect x="9" y="8" width="3" height="3"/>
<rect x="1" y="12" width="3" height="3"/><rect x="9" y="12" width="3" height="3"/>
</g>
<rect x="4.5" y="3" width="4" height="13" fill="#2f6fb8"/>
<g fill="#7fb8f0"><rect x="5" y="4" width="3" height="3"/><rect x="5" y="8" width="3" height="3"/><rect x="5" y="12" width="3" height="3"/></g>
<g fill="#fff"><rect x="6" y="5" width="1" height="1"/><rect x="6" y="9" width="1" height="1"/><rect x="6" y="13" width="1" height="1"/></g>
</svg>
<svg class="a" style="left:104px;top:127px" width="6" height="4" viewBox="0 0 6 4"><path d="M0 0 H6 L3 3.5 Z" fill="#000"/></svg>
<!-- yellow close X -->
<svg class="a" style="left:937px;top:122px" width="12" height="12" viewBox="0 0 12 12"><path d="M2.6 2.6 L9.4 9.4 M9.4 2.6 L2.6 9.4" stroke="#000" stroke-width="2.3"/></svg>
<!-- toolbox close X -->
<svg class="a" style="left:936px;top:285px" width="11" height="11" viewBox="0 0 11 11"><path d="M1.7 1.7 L9.3 9.3 M9.3 1.7 L1.7 9.3" stroke="#000" stroke-width="2.4"/></svg>
<!-- /ICONS -->

<!-- PARTS -->
<!-- tree dotted lines -->
<svg class="a" style="left:25px;top:311px" width="160" height="188" viewBox="25 311 160 188">
<g stroke="#8a8a8a" stroke-width="1" stroke-dasharray="1 1" fill="none">
<path d="M37.5 312 V354 M37.5 363 V426"/>
<path d="M56.5 312 V340 M56.5 365 V412 M56.5 438 V484"/>
<path d="M57 322.5 H67 M57 340.5 H69 M57 376.5 H67 M57 394.5 H67 M57 412.5 H69 M57 448.5 H67 M57 466.5 H67 M57 484.5 H67"/>
<path d="M42 358.5 H48 M42 430.5 H48"/>
</g>
<!-- expanders -->
<rect x="33.5" y="354.5" width="8" height="8" fill="#f2f2f2" stroke="#969696"/>
<path d="M35.5 358.5 H39.5" stroke="#2a5aa0"/>
<rect x="33.5" y="426.5" width="8" height="8" fill="#f2f2f2" stroke="#969696"/>
<path d="M35.5 430.5 H39.5" stroke="#2a5aa0"/>
<!-- calendar -->
<rect x="67.5" y="314.5" width="15" height="14" fill="#fff" stroke="#5a6a8a"/>
<rect x="68" y="315" width="14" height="2" fill="#3a78d8"/>
<path d="M80.5 318 V328" stroke="#b8c8e8" stroke-width="1" stroke-dasharray="1 1"/>
<text x="67.8" y="327.8" font-family="Liberation Serif" font-weight="bold" font-size="14" letter-spacing="-1" fill="#000">31</text>
<!-- numbers docs -->
<g id="numdoc">
<path d="M69.5 332.5 H77 L80.5 336 V345.5 H69.5 Z" fill="#f8f8fc" stroke="#4a5a7a"/>
<path d="M80 337 V345" stroke="#a8b0c0"/>
<path d="M77 332.5 V336 H80.5" fill="none" stroke="#4a5a7a" stroke-width="0.8"/>
<path d="M72.6 335.5 L71.6 341.5 M75.4 335.5 L74.4 341.5 M71 337.4 H76.5 M70.6 339.6 H76" stroke="#101a8a" stroke-width="1.2"/>
</g>
<use href="#numdoc" transform="translate(0,72)"/>
<!-- red X -->
<path d="M50 351 L62 363 M62 351 L50 363" stroke="#901010" stroke-width="4.2"/>
<path d="M50 351 L62 363 M62 351 L50 363" stroke="#e82424" stroke-width="2.6"/>
<!-- A= icon -->
<g id="adoc">
<rect x="67.5" y="368.5" width="14" height="12" fill="#f8fbff" stroke="#3a4a6a"/>
<rect x="68" y="375" width="13" height="5" fill="#c8d8f0"/>
<path d="M68.8 375.2 L71.2 369.8 L73.6 375.2 M69.8 373.4 H72.6" fill="none" stroke="#000" stroke-width="1.3"/>
<path d="M75 370.5 H80 M75 372.5 H80 M75 374.5 H80 M69 376.5 H80 M69 378.5 H80" stroke="#5a7ab0" stroke-width="0.9"/>
</g>
<use href="#adoc" transform="translate(0,72)"/>
<!-- a|e -->
<text x="67.6" y="395.6" font-family="Liberation Serif" font-size="14.5" fill="#1a1a1a">a</text>
<text x="76.4" y="395.6" font-family="Liberation Serif" font-size="14.5" fill="#1a1a1a">e</text>
<path d="M74.5 386.5 V399.5 M72.5 386.5 H76.5 M72.5 399.5 H76.5" stroke="#000" stroke-width="1"/>
<!-- tools icons -->
<g id="tools">
<path d="M49.5 427 C49.5 425.3 51.2 425.3 51.2 427 L51.2 428.6 L52.3 429.2 L53.3 428.6 L53.3 427 C53.3 425.3 55.6 425.3 55.6 427.3 C55.6 429 54.6 430 53.7 430.6 L53.7 435.6 L50.9 435.6 L50.9 430.6 C50 430 49.5 429 49.5 427 Z" fill="#d8e8ff" stroke="#1f4fd0" stroke-width="1"/>
<rect x="56.3" y="427.3" width="3.6" height="8.4" rx="1.6" fill="#d42a2a" stroke="#8a1010" stroke-width="0.7"/>
<path d="M54 424.5 L56.5 422.5 L60 422.5 L62.3 425.2 L61.2 426.2 L58.8 424.6 L55.6 425.8 Z" fill="#8a8a8a" stroke="#303030" stroke-width="0.7"/>
<rect x="57.2" y="425" width="2" height="2.6" fill="#303030"/>
</g>
<use href="#tools" transform="translate(20,36)"/>
<use href="#tools" transform="translate(20,54)"/>
</svg>
<!-- selection bg -->
<div class="a" style="left:86px;top:456px;width:73px;height:18px;background:#e5e5e5"></div>
<!-- tree labels -->
<div class="t" style="left:88px;top:315px;letter-spacing:0.3px">Date/Time</div>
<div class="t" style="left:88px;top:333px;letter-spacing:0.25px">Numbers</div>
<div class="t" style="left:69px;top:351px">Remove</div>
<div class="t" style="left:88px;top:369px">Text</div>
<div class="t" style="left:88px;top:387px;letter-spacing:-0.25px">Space</div>
<div class="t" style="left:88px;top:405px;letter-spacing:0.25px">Numbers</div>
<div class="t" style="left:69px;top:423px">Other</div>
<div class="t" style="left:88px;top:441px;letter-spacing:-0.38px">Reverse Text</div>
<div class="t" style="left:88px;top:459px;letter-spacing:-0.35px">Change Case</div>
<div class="t" style="left:88px;top:477px">Split Name</div>
<!-- tree scrollbar -->
<div class="a" style="left:185px;top:311px;width:17px;height:188px;background:#f0f0f0"></div>
<div class="a" style="left:185px;top:396px;width:15px;height:85px;background:#cdcdcd"></div>
<svg class="a" style="left:188px;top:317px" width="10" height="8" viewBox="0 0 10 8"><path d="M1.3 6.2 L4.5 2.2 L7.7 6.2" fill="none" stroke="#5a5a5a" stroke-width="1.9"/></svg>
<svg class="a" style="left:188px;top:486px" width="10" height="8" viewBox="0 0 10 8"><path d="M1.3 1.8 L4.5 5.8 L7.7 1.8" fill="none" stroke="#5a5a5a" stroke-width="1.9"/></svg>

<!-- radios change case -->
<svg class="a" style="left:360px;top:316px" width="16" height="115" viewBox="360 316 16 115">
<g fill="#fafafa" stroke="#4e4e4e" stroke-width="1">
<circle cx="367.5" cy="323.5" r="6"/>
<circle cx="367.5" cy="348.5" r="6"/>
<circle cx="367.5" cy="373.5" r="6"/>
<circle cx="367.5" cy="398.5" r="6"/>
<circle cx="367.5" cy="423.5" r="6"/>
</g>
<circle cx="367.5" cy="323.5" r="3.2" fill="#1a1a1a"/>
</svg>
<div class="t" style="left:380px;top:318px;letter-spacing:-0.15px">Upper Case</div>
<div class="t" style="left:380px;top:343px;letter-spacing:-0.15px">Lower Case</div>
<div class="t" style="left:380px;top:368px;letter-spacing:-0.35px">Sentence Case</div>
<div class="t" style="left:380px;top:393px;letter-spacing:-0.12px">Title Case</div>
<div class="t" style="left:380px;top:418px">Capitalize</div>

<!-- apply to radios -->
<svg class="a" style="left:579px;top:334px" width="16" height="42" viewBox="579 334 16 42">
<g fill="#fafafa" stroke="#4e4e4e" stroke-width="1">
<circle cx="586.5" cy="341.5" r="6"/>
<circle cx="586.5" cy="367.5" r="6"/>
</g>
<circle cx="586.5" cy="367.5" r="3.2" fill="#1a1a1a"/>
</svg>
<div class="t" style="left:599px;top:336px">Whole Document</div>
<div class="t" style="left:599px;top:362px;letter-spacing:-0.2px">Selected Cells</div>

<!-- preview checkboxes -->
<svg class="a" style="left:733px;top:334px" width="16" height="44" viewBox="733 334 16 44">
<rect x="734.5" y="335.5" width="12" height="12" fill="#fff" stroke="#333"/>
<path d="M737 341.5 L739.5 344.5 L744.5 338" fill="none" stroke="#000" stroke-width="1.8"/>
<rect x="734.5" y="362.5" width="12" height="12" fill="#f4f4f4" stroke="#bcbcbc"/>
<path d="M737 368.5 L739.5 371.5 L744.5 365" fill="none" stroke="#a0a0a0" stroke-width="1.8"/>
</svg>
<div class="t" style="left:753px;top:336px;letter-spacing:-0.15px">Show Cell Changes</div>
<div class="t" style="left:753px;top:363px;color:#a0a0a0;letter-spacing:0.18px">Highlight Matching Cell(s)</div>

<!-- button chevrons + cursor -->
<svg class="a" style="left:750px;top:438px" width="180" height="24" viewBox="750 438 180 24">
<defs><linearGradient id="chg" x1="0" y1="0" x2="0" y2="1"><stop offset="0" stop-color="#8a9ab0"/><stop offset="0.35" stop-color="#2a6ab8"/><stop offset="1" stop-color="#6ab8f0"/></linearGradient></defs>
<path d="M754.2 450 L761.6 442.3 L764.3 445 L759.4 450 L764.3 455 L761.6 457.7 Z" fill="url(#chg)" stroke="#0a2450" stroke-width="1"/>
<path d="M926 450 L918.6 442.3 L915.9 445 L920.8 450 L915.9 455 L918.6 457.7 Z" fill="url(#chg)" stroke="#0a2450" stroke-width="1"/>
</svg>
<svg class="a" style="left:848px;top:458px" width="20" height="25" viewBox="848 458 20 25"><path d="M851.8 461.5 L851.8 477 L855.2 473.8 L858 479.2 L860.4 478 L857.8 472.6 L862.6 472.6 Z" fill="#fff" stroke="#000" stroke-width="1.1" stroke-linejoin="round"/></svg>

<!-- status bar -->
<div class="a" style="left:95px;top:518px;width:22px;height:18px;border:1px solid;border-color:#a0a0a0 #fff #fff #a0a0a0;background:#f7f7f7"></div>
<div class="t" style="left:100px;top:522px;letter-spacing:-0.6px">12</div>
<div class="a" style="left:184px;top:518px;width:34px;height:18px;border:1px solid;border-color:#a0a0a0 #fff #fff #a0a0a0;background:#f7f7f7"></div>
<div class="t" style="left:189px;top:522px;letter-spacing:-0.9px">5000</div>
<div class="a" style="left:258px;top:518px;width:585px;height:18px;border:1px solid;border-color:#a0a0a0 #fff #fff #a0a0a0;background:#f7f7f7"></div>
<div class="a" style="left:893px;top:518px;width:16px;height:18px;border:1px solid;border-color:#a0a0a0 #fff #fff #a0a0a0;background:#f7f7f7"></div>
<div class="t" style="left:898px;top:522px">5</div>
<div class="a" style="left:940px;top:518px;width:16px;height:18px;border:1px solid;border-color:#a0a0a0 #fff #fff #a0a0a0;background:#f7f7f7"></div>
<div class="t" style="left:945px;top:522px">4</div>
<svg class="a" style="left:957px;top:525px" width="12" height="12" viewBox="0 0 12 12"><g fill="#a8a8a8"><rect x="9" y="1" width="2" height="2"/><rect x="5" y="5" width="2" height="2"/><rect x="9" y="5" width="2" height="2"/><rect x="1" y="9" width="2" height="2"/><rect x="5" y="9" width="2" height="2"/><rect x="9" y="9" width="2" height="2"/></g></svg>
<!-- /PARTS -->
<!-- status labels -->
<div class="t" style="left:12px;top:522px;letter-spacing:0.3px">Column Count</div>
<div class="t" style="left:121px;top:522px">Row Count</div>
<div class="t" style="left:222px;top:522px">Status</div>
<div class="t" style="left:460px;top:522px;letter-spacing:-0.36px">Source: Example Source - 5000.csv</div>
<div class="t" style="left:846px;top:522px">Column</div>
<div class="t" style="left:913px;top:522px">Row</div>
</body></html>
